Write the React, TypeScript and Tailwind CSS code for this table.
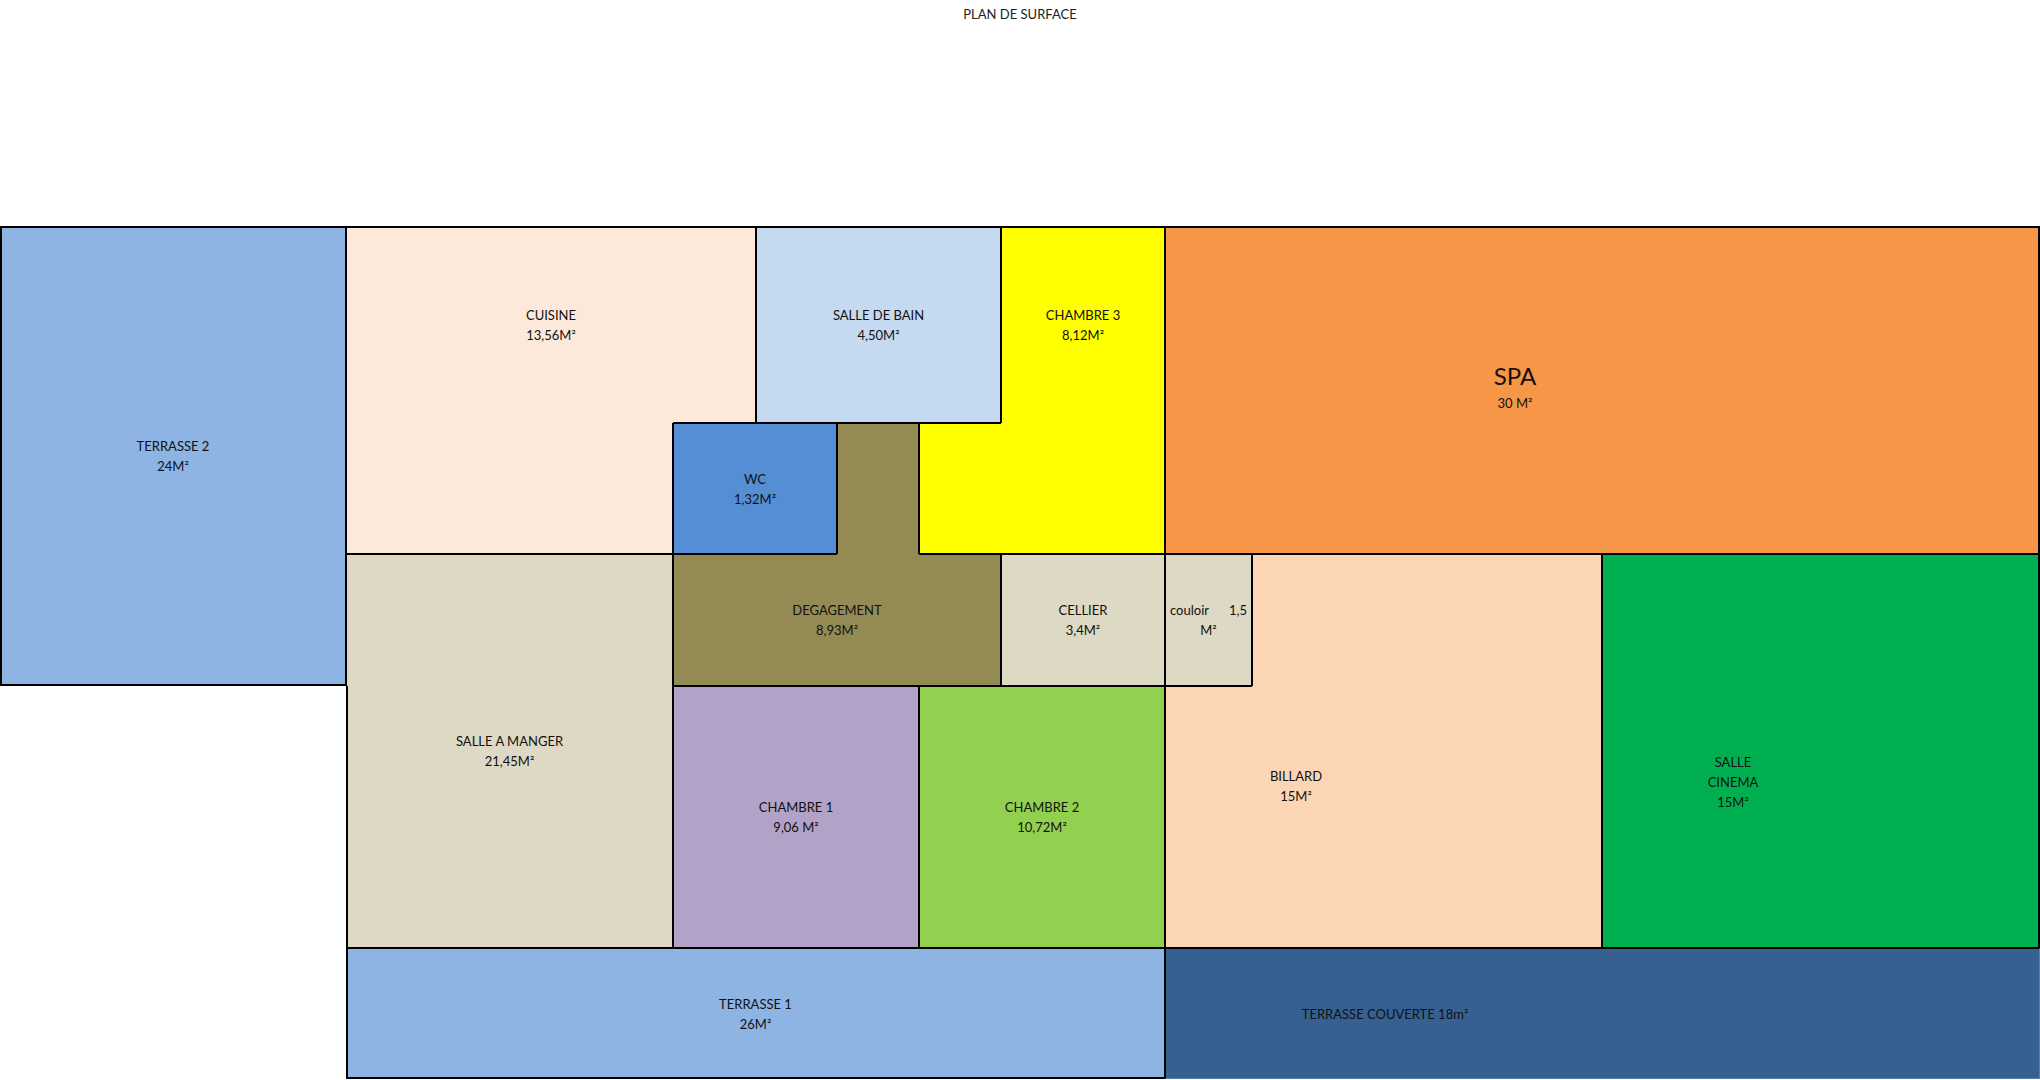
import React from "react";

const pieces: string[] = [
  // TERRASSE 2
  "col-start-1 col-end-2 row-start-1 row-end-4 bg-[#8EB4E3] border-t-2 border-r border-b-2 border-l-2",
  // CUISINE (L shape)
  "col-start-2 col-end-3 row-start-1 row-end-2 bg-[#FDE9D9] border-t-2 border-l",
  "col-start-3 col-end-4 row-start-1 row-end-2 bg-[#FDE9D9] border-t-2 border-r border-b",
  "col-start-2 col-end-3 row-start-2 row-end-3 bg-[#FDE9D9] border-r border-b border-l",
  // SALLE DE BAIN
  "col-start-4 col-end-7 row-start-1 row-end-2 bg-[#C5D9F1] border-t-2 border-r border-b border-l",
  // CHAMBRE 3 (L shape)
  "col-start-7 col-end-8 row-start-1 row-end-2 bg-[#FFFF00] border-t-2 border-r border-l",
  "col-start-6 col-end-7 row-start-2 row-end-3 bg-[#FFFF00] border-t border-b border-l",
  "col-start-7 col-end-8 row-start-2 row-end-3 bg-[#FFFF00] border-r border-b",
  // SPA
  "col-start-8 col-end-11 row-start-1 row-end-3 bg-[#F79646] border-t-2 border-r-2 border-b border-l",
  // WC
  "col-start-3 col-end-5 row-start-2 row-end-3 bg-[#558ED5] border",
  // DEGAGEMENT (T shape)
  "col-start-5 col-end-6 row-start-2 row-end-3 bg-[#948A54] border-t border-r border-l",
  "col-start-3 col-end-5 row-start-3 row-end-4 bg-[#948A54] border-t border-b border-l",
  "col-start-5 col-end-6 row-start-3 row-end-4 bg-[#948A54] border-b",
  "col-start-6 col-end-7 row-start-3 row-end-4 bg-[#948A54] border-t border-r border-b",
  // CELLIER
  "col-start-7 col-end-8 row-start-3 row-end-4 bg-[#DDD9C4] border",
  // COULOIR
  "col-start-8 col-end-9 row-start-3 row-end-4 bg-[#DDD9C4] border",
  // SALLE A MANGER
  "col-start-2 col-end-3 row-start-3 row-end-4 bg-[#DDD9C4] border-t border-r border-l",
  "col-start-2 col-end-3 row-start-4 row-end-5 bg-[#DDD9C4] border-r border-b border-l-2",
  // CHAMBRE 1
  "col-start-3 col-end-6 row-start-4 row-end-5 bg-[#B2A2C7] border",
  // CHAMBRE 2
  "col-start-6 col-end-8 row-start-4 row-end-5 bg-[#92D050] border",
  // BILLARD (L shape)
  "col-start-9 col-end-10 row-start-3 row-end-4 bg-[#FCD5B4] border-t border-r border-l",
  "col-start-8 col-end-9 row-start-4 row-end-5 bg-[#FCD5B4] border-t border-b border-l",
  "col-start-9 col-end-10 row-start-4 row-end-5 bg-[#FCD5B4] border-r border-b",
  // SALLE CINEMA
  "col-start-10 col-end-11 row-start-3 row-end-5 bg-[#00B050] border-t border-r-2 border-b border-l",
  // TERRASSE 1
  "col-start-2 col-end-8 row-start-5 row-end-6 bg-[#8EB4E3] border-t border-r border-b-2 border-l-2",
  // TERRASSE COUVERTE
  "col-start-8 col-end-11 row-start-5 row-end-6 bg-[#366092] border-t border-l border-r border-b border-r-[#5a7fb0] border-b-[#5a7fb0]",
];

type Label = { cls: string; lines: string[] };

const labels: Label[] = [
  { cls: "col-start-1 col-end-2 row-start-1 row-end-4", lines: ["TERRASSE 2", "24M²"] },
  { cls: "col-start-2 col-end-4 row-start-1 row-end-2", lines: ["CUISINE", "13,56M²"] },
  { cls: "col-start-4 col-end-7 row-start-1 row-end-2", lines: ["SALLE DE BAIN", "4,50M²"] },
  { cls: "col-start-7 col-end-8 row-start-1 row-end-2", lines: ["CHAMBRE 3", "8,12M²"] },
  { cls: "col-start-3 col-end-5 row-start-2 row-end-3", lines: ["WC", "1,32M²"] },
  { cls: "col-start-3 col-end-7 row-start-3 row-end-4", lines: ["DEGAGEMENT", "8,93M²"] },
  { cls: "col-start-7 col-end-8 row-start-3 row-end-4", lines: ["CELLIER", "3,4M²"] },
  { cls: "col-start-2 col-end-3 row-start-3 row-end-5", lines: ["SALLE A MANGER", "21,45M²"] },
  { cls: "col-start-3 col-end-6 row-start-4 row-end-5", lines: ["CHAMBRE 1", "9,06 M²"] },
  { cls: "col-start-6 col-end-8 row-start-4 row-end-5", lines: ["CHAMBRE 2", "10,72M²"] },
  { cls: "col-start-8 col-end-10 row-start-3 row-end-5 pr-[175px] pt-[69px]", lines: ["BILLARD", "15M²"] },
  { cls: "col-start-10 col-end-11 row-start-3 row-end-5 pr-[176px] pt-[61px]", lines: ["SALLE", "CINEMA", "15M²"] },
  { cls: "col-start-2 col-end-8 row-start-5 row-end-6", lines: ["TERRASSE 1", "26M²"] },
  { cls: "col-start-8 col-end-11 row-start-5 row-end-6 pr-[435px]", lines: ["TERRASSE COUVERTE 18m²"] },
];

export default function App() {
  return (
    <div className="w-[2040px] h-[1080px] bg-white overflow-hidden font-[Lato,sans-serif] text-[13px] text-[#111]">
      <div className="h-[29px] leading-[29px] text-center text-[#222]">PLAN DE SURFACE</div>
      <div className="mt-[197px] grid grid-cols-[346px_327px_83px_81px_82px_82px_164px_87px_350px_438px] grid-rows-[197px_131px_132px_262px_131px]">
        {pieces.map((cls, i) => (
          <div key={"p" + i} className={cls + " border-solid border-black"} />
        ))}
        {labels.map((l, i) => (
          <div
            key={"l" + i}
            className={l.cls + " flex flex-col items-center justify-center text-center leading-[20px] whitespace-nowrap pointer-events-none"}
          >
            {l.lines.map((t, j) => (
              <div key={j}>{t}</div>
            ))}
          </div>
        ))}
        {/* SPA */}
        <div className="col-start-8 col-end-11 row-start-1 row-end-3 pr-[175px] pb-[8px] flex flex-col items-center justify-center text-center pointer-events-none">
          <div className="text-[24px] leading-[34px]">SPA</div>
          <div className="leading-[20px]">30 M²</div>
        </div>
        {/* COULOIR */}
        <div className="col-start-8 col-end-9 row-start-3 row-end-4 px-[5px] flex flex-col justify-center leading-[20px] pointer-events-none">
          <div className="flex justify-between">
            <span>couloir</span>
            <span>1,5</span>
          </div>
          <div className="text-center">M²</div>
        </div>
      </div>
    </div>
  );
}
